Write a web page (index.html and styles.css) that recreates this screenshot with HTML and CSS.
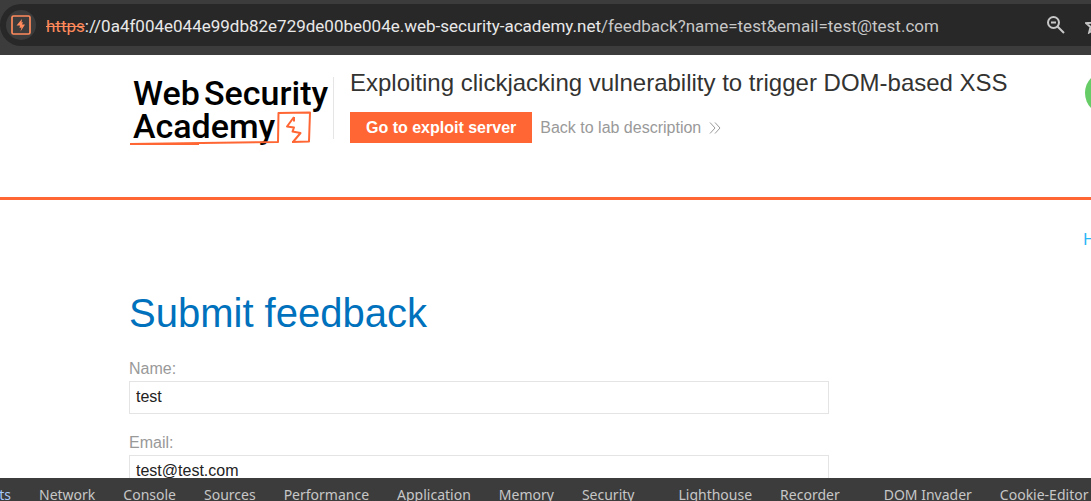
FILE: index.html
```html
<!DOCTYPE html>
<html lang="en">
<head>
<meta charset="utf-8">
<title>Exploiting clickjacking vulnerability to trigger DOM-based XSS</title>
<link rel="stylesheet" href="styles.css">
</head>
<body>
<div class="toolbar">
  <div class="address">
    <button class="site-info" aria-label="Site information">
      <svg width="20" height="20" viewBox="0 0 20 20"><rect x="1" y="1" width="18" height="18" rx="1.5" fill="none" stroke="#ff8a5c" stroke-width="1.7"/><path d="M11 4 5.500 10.500h3.500L8.500 13l2-.5L9.500 16.500 14 9.500h-3L12 7l-1.500.5z" fill="#ff8a5c"/></svg>
    </button>
    <div class="url"><span class="scheme">https</span><span class="host">://0a4f004e044e99db82e729de00be004e.web-security-academy.net</span>/feedback?name=test&amp;email=test@test.com</div>
    <button class="tool" aria-label="Zoom">
      <svg width="18" height="18" viewBox="0 0 18 18" fill="none" stroke="#c7c7c7" stroke-width="2"><circle cx="6.500" cy="6.500" r="5.500"/><path d="M4 6.500h5M10.500 10.500l6.500 6.500"/></svg>
    </button>
    <button class="tool" aria-label="Bookmark">
      <svg width="18" height="18" viewBox="0 0 18 18" fill="none" stroke="#c7c7c7" stroke-width="2"><path d="M9 1.500l2.200 5.200 5.600.5-4.300 3.700 1.300 5.500L9 13.500l-4.800 2.900 1.300-5.500L1.200 7.200l5.600-.5z"/></svg>
    </button>
  </div>
</div>
<div class="page">
  <header class="lab-header">
    <a class="logo" href="#" aria-label="Web Security Academy">
      <svg width="204" height="70" viewBox="0 0 204 70">
        <g class="logo-text"><text x="4" y="28">Web</text><text x="75" y="28">Security</text><text x="4" y="61">Academy</text></g>
        <g fill="none" stroke="#ff6633" stroke-width="2" stroke-linejoin="round">
          <path d="M1 67 L149 65 L149.500 36 L181 35.500 L180 64.500 L163 65"/>
          <path d="M2 67.500 L70 67.500" stroke-width="1"/>
          <path d="M165 40 L158 49.500 L165 50.500 L163.500 54.500 L171.500 56 L164 65 M165 40 L165 44.500"/>
        </g>
      </svg>
    </a>
    <div class="lab-info">
      <h2>Exploiting clickjacking vulnerability to trigger DOM-based XSS</h2>
      <div class="lab-links">
        <button class="exploit">Go to exploit server</button>
        <a class="back" href="#">Back to lab description
          <svg width="12" height="12" viewBox="0 0 12 12" fill="none" stroke="#9a9a9a"><path d="M1 .5 6 6l-5 5.500M6 .5 11 6l-5 5.500"/></svg></a>
      </div>
    </div>
    <span class="status"></span>
  </header>
  <main>
    <nav class="nav"><a href="#">Home</a></nav>
    <h1>Submit feedback</h1>
    <form class="feedback">
      <label for="name">Name:</label>
      <input id="name" type="text" value="test">
      <label for="email">Email:</label>
      <input id="email" type="text" value="test@test.com">
    </form>
  </main>
</div>
<div class="devtools">
  <button class="tab active">Elements</button>
  <button class="tab">Network</button>
  <button class="tab">Console</button>
  <button class="tab">Sources</button>
  <button class="tab">Performance</button>
  <button class="tab">Application</button>
  <button class="tab">Memory</button>
  <button class="tab wide">Security</button>
  <button class="tab">Lighthouse</button>
  <button class="tab wide">Recorder</button>
  <button class="tab">DOM Invader</button>
  <button class="tab">Cookie-Editor</button>
</div>
</body>
</html>
```
FILE: styles.css
```css
* { box-sizing: border-box; }
body {
  margin: 0;
  height: 100vh;
  display: flex;
  flex-direction: column;
  overflow: hidden;
  background: #fff;
  font: 16px/20px "Liberation Sans", Arial, sans-serif;
}
button { font: inherit; border: 0; padding: 0; background: none; }
svg { display: block; }
a { text-decoration: none; }

.toolbar { flex: none; padding: 4px 0 9px; background: #3c3c3c; overflow: hidden; }
.address {
  display: flex;
  align-items: center;
  height: 42px;
  padding-left: 6px;
  border-radius: 21px 0 0 21px;
  background: #282828;
  white-space: nowrap;
}
.site-info {
  flex: none;
  display: grid;
  place-items: center;
  width: 30px;
  height: 30px;
  border-radius: 50%;
  background: #3c3c3c;
}
.url {
  flex: 1;
  margin-left: 10px;
  padding-top: 2px;
  font: 17px/24px Roboto, "Open Sans", sans-serif;
  color: #c7c7c7;
}
.scheme { color: #ff8a5c; text-decoration: line-through; }
.host { color: #e8e8e8; }
.tool { flex: none; margin-right: 20px; }
.tool:last-child { margin-right: -12px; }

.page { flex: 1; min-height: 0; overflow: hidden; }
.lab-header {
  display: flex;
  height: 145px;
  padding: 16px 0 0 129px;
  border-bottom: 3px solid #ff6633;
}
.logo { flex: none; height: 62px; margin-top: 6px; border-right: 1px solid #e5e5e5; }
.logo svg { overflow: visible; }
.logo-text { font: 500 34px Roboto, sans-serif; fill: #000; }
.lab-info { flex: 1; margin-left: 16px; white-space: nowrap; }
h2 { margin: 0; font-size: 24px; line-height: 24px; font-weight: 400; color: #333332; }
.lab-links { display: flex; align-items: center; gap: 8px; margin-top: 17px; }
.exploit { height: 31px; padding: 0 16px; background: #ff6633; color: #fff; font-weight: 700; }
.back { display: flex; align-items: center; gap: 8px; color: #999; }
.status { flex: none; width: 44px; height: 44px; margin: 0 -38px 0 0; border-radius: 50%; background: #6c6; }

main { padding: 30px 0 0 129px; }
.nav { display: flex; justify-content: flex-end; margin-right: -35px; }
.nav a { color: #29b6f6; }
h1 { margin: 39px 0 20px; font-size: 40px; line-height: 48px; font-weight: 400; color: #0071bc; }
.feedback { display: flex; flex-direction: column; max-width: 700px; }
.feedback label { line-height: 24px; color: #999; }
.feedback input {
  height: 33px;
  margin-bottom: 17px;
  padding: 0 6px 2px;
  border: 1px solid #e4e4e4;
  font: inherit;
  color: #222;
}

.devtools {
  flex: none;
  display: flex;
  gap: 28px;
  height: 23px;
  overflow: hidden;
  background: #3c3c3c;
}
.tab {
  flex: none;
  height: 34px;
  font: 14px/34px "Noto Sans", sans-serif;
  color: #c7c7c7;
}
.tab.wide { margin-right: 16px; }
.tab.active { display: flex; justify-content: flex-end; width: 11px; color: #a8c7fa; }
```
